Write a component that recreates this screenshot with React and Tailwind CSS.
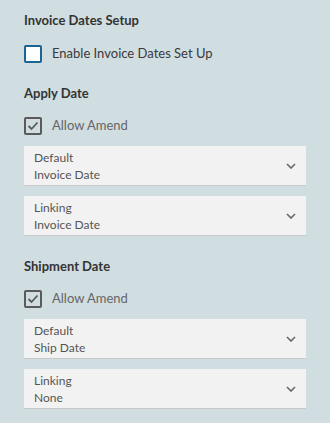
import React from 'react';

const Chevron = () => (
  <svg width="10" height="6" viewBox="0 0 10 6" className="shrink-0">
    <path d="M1 1l4 4 4-4" fill="none" stroke="#666" strokeWidth="1.6" />
  </svg>
);

const CheckBox = ({ checked, label }) => (
  <label className="flex items-center gap-[10px] h-[18px]">
    {checked ? (
      <span className="w-[18px] h-[18px] rounded-[2px] border-2 border-[#5a5a5a] flex items-center justify-center">
        <svg width="12" height="10" viewBox="0 0 12 10">
          <path d="M1.5 5l3 3 6-6.5" fill="none" stroke="#5a5a5a" strokeWidth="1.8" />
        </svg>
      </span>
    ) : (
      <span className="w-[18px] h-[18px] rounded-[2px] border-2 border-[#1c6494] bg-white" />
    )}
    <span className={checked ? 'text-[#666]' : 'text-[#3a3a3a]'}>{label}</span>
  </label>
);

const Select = ({ label, value }) => (
  <div className="h-10 bg-[#f2f2f2] border-b border-[#c8c8c8] flex items-center pl-[10px] pr-[10px]">
    <div className="flex-1 flex flex-col text-[12px] leading-[17px] text-[#555]">
      <span>{label}</span>
      <span>{value}</span>
    </div>
    <Chevron />
  </div>
);

const Section = ({ title, children }) => (
  <div className="flex flex-col">
    <h2 className="font-bold text-[13px] leading-5 text-[#333]">{title}</h2>
    {children}
  </div>
);

export default function App() {
  const font = { fontFamily: '"Lato", "Noto Sans", sans-serif' };
  return (
    <div className="w-[330px] h-[423px] bg-[#d0dde1] px-6 pt-[10px]" style={font}>
      <Section title="Invoice Dates Setup">
        <div className="mt-[15px] text-[13px]">
          <CheckBox label="Enable Invoice Dates Set Up" />
        </div>
      </Section>
      <div className="mt-5">
        <Section title="Apply Date">
          <div className="mt-[14px] text-[13px]">
            <CheckBox checked label="Allow Amend" />
          </div>
          <div className="mt-[11px] flex flex-col gap-[10px]">
            <Select label="Default" value="Invoice Date" />
            <Select label="Linking" value="Invoice Date" />
          </div>
        </Section>
      </div>
      <div className="mt-5">
        <Section title="Shipment Date">
          <div className="mt-[14px] text-[13px]">
            <CheckBox checked label="Allow Amend" />
          </div>
          <div className="mt-[11px] flex flex-col gap-[10px]">
            <Select label="Default" value="Ship Date" />
            <Select label="Linking" value="None" />
          </div>
        </Section>
      </div>
    </div>
  );
}
